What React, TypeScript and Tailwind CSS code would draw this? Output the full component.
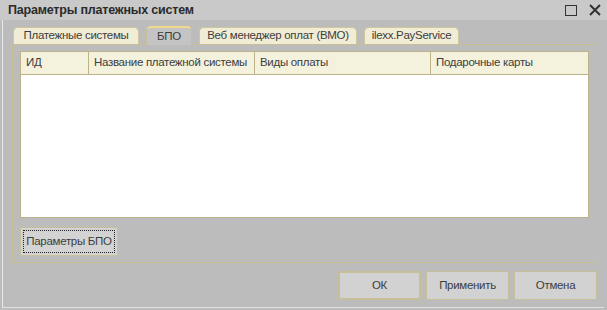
const tabs = [
  { label: "Платежные системы", w: "w-[126px]" },
  { label: "БПО", w: "w-[46px]", active: true },
  { label: "Веб менеджер оплат (ВМО)", w: "w-[158px]" },
  { label: "ilexx.PayService", w: "w-[95px]" },
];

const columns = [
  { label: "ИД", w: "w-[68px]" },
  { label: "Название платежной системы", w: "w-[166px]" },
  { label: "Виды оплаты", w: "w-[176px]" },
  { label: "Подарочные карты", w: "flex-1" },
];

export default function App() {
  return (
    <div
      className="w-[607px] h-[310px] bg-[#bcbcbc] flex flex-col overflow-hidden text-[11.5px] tracking-[-0.3px] whitespace-nowrap text-[#3d3d3d]"
      style={{ fontFamily: "'Liberation Sans', Arial, sans-serif" }}
    >
      {/* заголовок окна */}
      <div className="h-[20px] bg-[#c9c9c9] flex items-center pl-[8px] pr-[6px]">
        <span className="font-bold text-[12.5px] text-[#2b2b2b] tracking-[-0.2px]">
          Параметры платежных систем
        </span>
        <div className="ml-auto flex items-center gap-[12px]">
          <div className="w-[12px] h-[11px] border-[1.5px] border-[#333]" />
          <svg width="12" height="12" viewBox="0 0 12 12">
            <path d="M1 1 L11 11 M11 1 L1 11" stroke="#333" strokeWidth="2" />
          </svg>
        </div>
      </div>

      <div className="flex-1 flex border-l-[1px] border-l-[#e9e9e9] ml-[2px] mr-[3px] border-b border-b-[#e0e0e0] mb-[2px]">
        <div className="flex-1 flex flex-col pl-[9px] pr-[6px] pt-[6px]">
          {/* вкладки */}
          <div className="flex items-end h-[18px] gap-[7px] pl-[1px]">
            {tabs.map((t) =>
              t.active ? (
                <div
                  key={t.label}
                  className={`${t.w} h-[19px] -mb-px relative z-10 bg-[#c4c4c4] border border-[#c8bf94] border-b-0 border-t-2 border-t-[#f0d88a] rounded-t-[5px] flex items-center justify-center`}
                >
                  {t.label}
                </div>
              ) : (
                <div
                  key={t.label}
                  className={`${t.w} h-[17px] bg-[#f1ecd5] border border-[#d0c69c] border-b-0 rounded-t-[5px] flex items-center justify-center`}
                >
                  {t.label}
                </div>
              )
            )}
          </div>

          {/* панель */}
          <div className="w-[586px] h-[219px] border border-[#c8bf94] flex flex-col pl-[7px] pr-[8px] pt-[6px]">
            <div className="h-[167px] border border-[#bdb38a] bg-white flex flex-col">
              <div className="h-[23px] bg-[#f4f1dd] border-b border-[#bdb38a] flex">
                {columns.map((c, i) => (
                  <div
                    key={c.label}
                    className={`${c.w} flex items-center pl-[5px] ${i < columns.length - 1 ? "border-r border-[#bdb38a]" : ""}`}
                  >
                    {c.label}
                  </div>
                ))}
              </div>
            </div>

            <div className="mt-[9px] flex">
              <div className="w-[98px] h-[29px] bg-[#d3d3d3] border border-[#c9c09a] rounded-[2px] p-[2px] flex">
                <div className="flex-1 border border-dotted border-[#222] flex items-center justify-center">
                  Параметры БПО
                </div>
              </div>
            </div>
          </div>

          {/* кнопки */}
          <div className="flex justify-end gap-[5px] mt-[8px] pr-[1px]">
            <div className="w-[83px] h-[29px] bg-[#d2d2d2] border-2 border-[#c7bf98] rounded-[2px] flex items-center justify-center">
              ОК
            </div>
            <div className="w-[83px] h-[29px] bg-[#d2d2d2] border border-[#c7bf98] rounded-[2px] flex items-center justify-center">
              Применить
            </div>
            <div className="w-[83px] h-[29px] bg-[#d2d2d2] border border-[#c7bf98] rounded-[2px] flex items-center justify-center">
              Отмена
            </div>
          </div>
        </div>
      </div>
    </div>
  );
}
